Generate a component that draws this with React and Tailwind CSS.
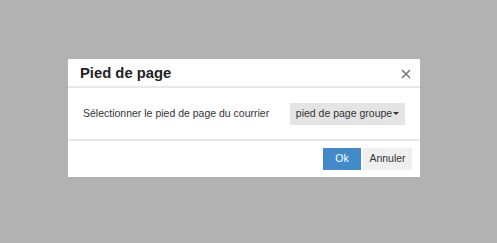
export default function App() {
  return (
    <div className="w-[497px] h-[243px] bg-[#b2b2b2] pt-[59px] pl-[68px] font-['Liberation_Sans',Arial,sans-serif]">
      <div className="w-[352px] h-[118px] bg-white flex flex-col">
        <div className="h-[29px] shrink-0 flex items-center justify-between pl-[12px] pr-[9px] border-b-2 border-[#e8e8e8]">
          <h1 className="text-[14.8px] font-bold text-[#222] leading-none pt-[2px]">Pied de page</h1>
          <svg width="10" height="10" viewBox="0 0 10 10" className="mt-[2px]">
            <path d="M1 1L9 9M9 1L1 9" stroke="#7a7a7a" strokeWidth="1.6" />
          </svg>
        </div>
        <div className="h-[53px] shrink-0 flex items-center justify-between pl-[15px] pr-[15px] border-b-2 border-[#e8e8e8]">
          <span className="text-[10.5px] text-[#333]">Sélectionner le pied de page du courrier</span>
          <button className="h-[22px] w-[115px] bg-[#e4e4e4] text-[10.5px] text-[#333] flex items-center justify-center gap-[1px]">
            pied de page groupe
            <span className="w-0 h-0 border-l-[3px] border-r-[3px] border-t-[3px] border-l-transparent border-r-transparent border-t-[#333]" />
          </button>
        </div>
        <div className="flex-1 flex items-center justify-end gap-[2px] pr-[8px]">
          <button className="h-[22px] w-[38px] bg-[#428bca] text-white text-[10.5px]">Ok</button>
          <button className="h-[22px] w-[49px] bg-[#efefef] text-[#333] text-[10.5px]">Annuler</button>
        </div>
      </div>
    </div>
  );
}
